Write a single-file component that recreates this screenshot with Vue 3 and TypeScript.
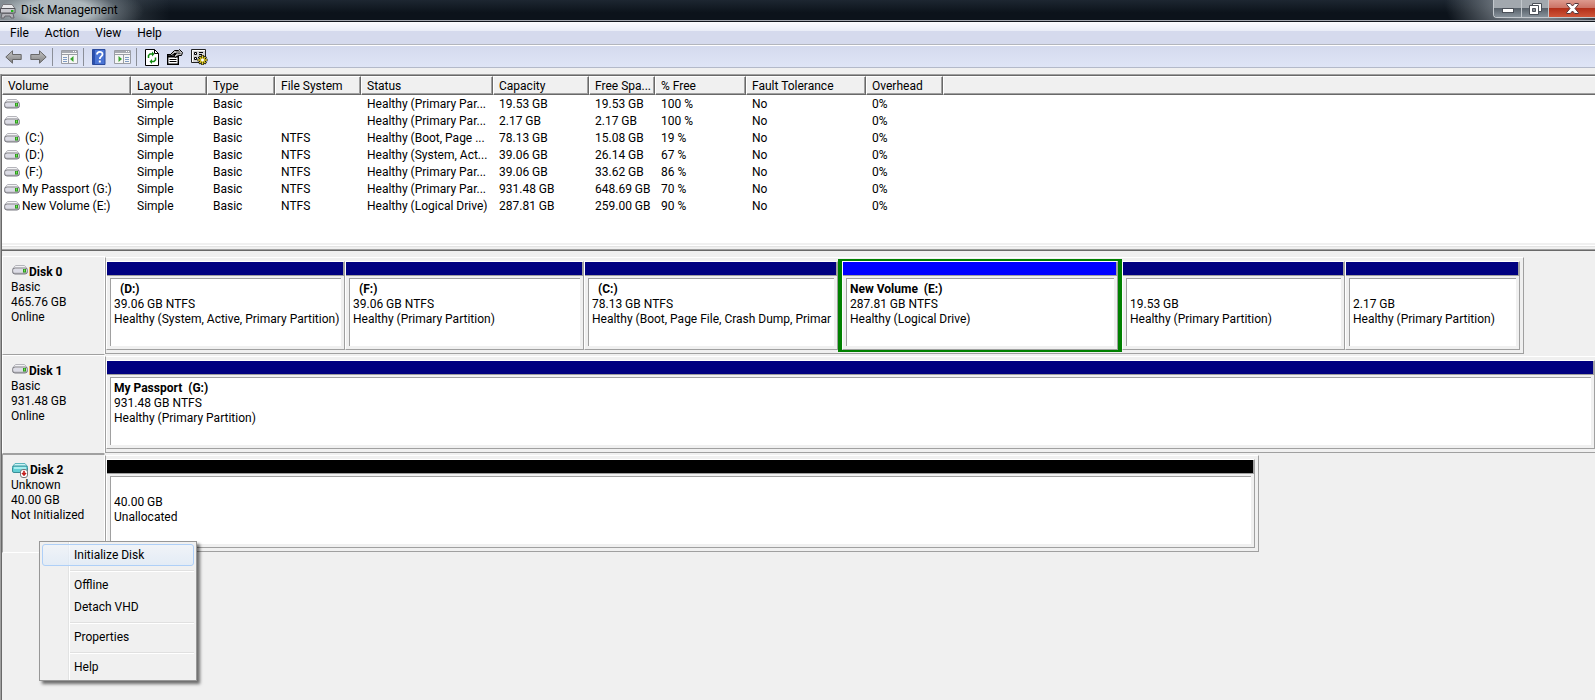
<script setup lang="ts">
interface Volume {
  name: string
  fs: string
  status: string
  capacity: string
  free: string
  percent: string
}

interface Partition {
  title: string
  size: string
  status: string
  span: number
  kind: 'primary' | 'logical' | 'unallocated'
  selected?: boolean
}

interface Disk {
  name: string
  type: string
  size: string
  state: string
  icon: 'drive' | 'unknown'
  span: number
  clipped?: boolean
  active?: boolean
  partitions: Partition[]
}

const menus = ['File', 'Action', 'View', 'Help']

const columns = [
  { label: 'Volume', cls: 'w-volume' },
  { label: 'Layout', cls: 'w-layout' },
  { label: 'Type', cls: 'w-type' },
  { label: 'File System', cls: 'w-fs' },
  { label: 'Status', cls: 'w-status' },
  { label: 'Capacity', cls: 'w-capacity' },
  { label: 'Free Spa...', cls: 'w-free' },
  { label: '% Free', cls: 'w-percent' },
  { label: 'Fault Tolerance', cls: 'w-fault' },
  { label: 'Overhead', cls: 'w-overhead' },
]

const volumes: Volume[] = [
  { name: '', fs: '', status: 'Healthy (Primary Par...', capacity: '19.53 GB', free: '19.53 GB', percent: '100 %' },
  { name: '', fs: '', status: 'Healthy (Primary Par...', capacity: '2.17 GB', free: '2.17 GB', percent: '100 %' },
  { name: ' (C:)', fs: 'NTFS', status: 'Healthy (Boot, Page ...', capacity: '78.13 GB', free: '15.08 GB', percent: '19 %' },
  { name: ' (D:)', fs: 'NTFS', status: 'Healthy (System, Act...', capacity: '39.06 GB', free: '26.14 GB', percent: '67 %' },
  { name: ' (F:)', fs: 'NTFS', status: 'Healthy (Primary Par...', capacity: '39.06 GB', free: '33.62 GB', percent: '86 %' },
  { name: 'My Passport (G:)', fs: 'NTFS', status: 'Healthy (Primary Par...', capacity: '931.48 GB', free: '648.69 GB', percent: '70 %' },
  { name: 'New Volume (E:)', fs: 'NTFS', status: 'Healthy (Logical Drive)', capacity: '287.81 GB', free: '259.00 GB', percent: '90 %' },
]

// Span of a full-width graph; each disk is scaled against it.
const FULL_SPAN = 1490

const disks: Disk[] = [
  {
    name: 'Disk 0', type: 'Basic', size: '465.76 GB', state: 'Online', icon: 'drive', span: 1419,
    partitions: [
      { title: '  (D:)', size: '39.06 GB NTFS', status: 'Healthy (System, Active, Primary Partition)', span: 239, kind: 'primary' },
      { title: '  (F:)', size: '39.06 GB NTFS', status: 'Healthy (Primary Partition)', span: 239, kind: 'primary' },
      { title: '  (C:)', size: '78.13 GB NTFS', status: 'Healthy (Boot, Page File, Crash Dump, Primar', span: 254, kind: 'primary' },
      { title: 'New Volume  (E:)', size: '287.81 GB NTFS', status: 'Healthy (Logical Drive)', span: 284, kind: 'logical', selected: true },
      { title: ' ', size: '19.53 GB', status: 'Healthy (Primary Partition)', span: 223, kind: 'primary' },
      { title: ' ', size: '2.17 GB', status: 'Healthy (Primary Partition)', span: 175, kind: 'primary' },
    ],
  },
  {
    name: 'Disk 1', type: 'Basic', size: '931.48 GB', state: 'Online', icon: 'drive', span: 1490, clipped: true,
    partitions: [
      { title: 'My Passport  (G:)', size: '931.48 GB NTFS', status: 'Healthy (Primary Partition)', span: 1489, kind: 'primary' },
    ],
  },
  {
    name: 'Disk 2', type: 'Unknown', size: '40.00 GB', state: 'Not Initialized', icon: 'unknown', span: 1154, active: true,
    partitions: [
      { title: ' ', size: '40.00 GB', status: 'Unallocated', span: 1149, kind: 'unallocated' },
    ],
  },
]

const contextGroups = [['Initialize Disk'], ['Offline', 'Detach VHD'], ['Properties'], ['Help']]

const graphWidth = (d: Disk) => ({ width: `${(d.span / FULL_SPAN) * 100}%` })

const slotWidth = (d: Disk, p: Partition) => {
  const total = d.partitions.reduce((sum, part) => sum + part.span, 0)
  return { width: `${(p.span / total) * 100}%` }
}
</script>

<template>
  <div class="window">
    <svg class="defs" width="0" height="0" aria-hidden="true">
      <defs>
        <linearGradient id="metal" x1="0" y1="0" x2="0" y2="1">
          <stop offset="0" stop-color="#f4f4f5" />
          <stop offset="1" stop-color="#a9a9b0" />
        </linearGradient>
        <linearGradient id="grey-arrow" x1="0" y1="0" x2="0" y2="1">
          <stop offset="0" stop-color="#c4c4c4" />
          <stop offset="1" stop-color="#808080" />
        </linearGradient>
        <symbol id="drive" viewBox="0 0 16 10">
          <path d="M3.500.5h9l2.600 3H.9z" fill="#f3f3f5" stroke="#b4b4ba" />
          <rect x=".5" y="3" width="15" height="6" rx="2.500" fill="url(#metal)" stroke="#7c7c84" />
          <path d="M2 4h9v3.500H2z" fill="#dcdce6" />
          <path d="M11 4h3v3.500h-3z" fill="#2c9e1c" />
          <path d="M12 4.500h1v2h-1z" fill="#7be05c" />
        </symbol>
        <symbol id="unknown" viewBox="0 0 17 15">
          <path d="M3 .5h10l2.500 3H.5z" fill="#c9f5f6" stroke="#5bb5bd" />
          <rect x=".5" y="3" width="15" height="6.500" rx="1.500" fill="#63cfd4" stroke="#3a8f98" />
          <path d="M2 4h12v2H2z" fill="#a9eef0" />
          <rect x="8.500" y="6.500" width="7" height="8" rx="2.500" fill="#fff" stroke="#77777c" />
          <path d="M11.500 8h1v2H14v1h-1v1h-1v1h-0v-1h-1v-1h-1v-1h1.500z" fill="#c41e1e" stroke="#c41e1e" stroke-width=".6" />
        </symbol>
      </defs>
    </svg>

    <header class="titlebar">
      <svg class="app-icon" width="16" height="16" viewBox="0 0 16 16" aria-hidden="true">
        <path d="M3 1.500h9l3 4H1z" fill="#e8e8ea" stroke="#77777c" />
        <path d="M.5 5.500h14.500v4.500H.5z" fill="#c9c9cf" stroke="#55555b" />
        <path d="M11 7h2.500v2H11z" fill="#25b51a" />
        <path d="M2 10.500h11l1 4.500h-3l-1-2H5l-1 2H1z" fill="#b2b2b8" stroke="#66666c" />
      </svg>
      <h1>Disk Management</h1>
      <div class="controls">
        <button class="ctl min" type="button" aria-label="Minimize">
          <svg width="12" height="6" viewBox="0 0 12 6"><rect x=".5" y=".5" width="11" height="4" fill="#fff" stroke="#4b5058" /></svg>
        </button>
        <button class="ctl restore" type="button" aria-label="Restore">
          <svg width="13" height="12" viewBox="0 0 13 12">
            <path d="M3.500 .5h9v8h-9z" fill="#fff" stroke="#4b5058" />
            <path d="M.5 2.500h9v9h-9z" fill="#fff" stroke="#4b5058" />
            <path d="M3.500 5.500h3v3h-3z" fill="#8b9097" stroke="#4b5058" />
          </svg>
        </button>
        <button class="ctl close" type="button" aria-label="Close">
          <svg width="13" height="11" viewBox="0 0 13 11">
            <path d="M.7.5h3.600l2.200 2.500L8.700.5h3.600v1L9 5.500l3.300 4v1H8.700L6.500 8l-2.200 2.500H.7v-1L4 5.500l-3.300-4z" fill="#fff" stroke="#54353a" />
          </svg>
        </button>
      </div>
    </header>

    <nav class="menubar">
      <button v-for="m in menus" :key="m" type="button">{{ m }}</button>
    </nav>

    <div class="toolbar" role="toolbar" aria-label="Standard">
      <button type="button" aria-label="Back">
        <svg width="17" height="14" viewBox="0 0 17 14"><path d="M.8 7L7.500.8v3.700h8.700v5H7.500v3.700z" fill="url(#grey-arrow)" stroke="#686868" /></svg>
      </button>
      <button type="button" aria-label="Forward">
        <svg width="17" height="14" viewBox="0 0 17 14"><path d="M16.200 7L9.500.8v3.700H.8v5h8.700v3.700z" fill="url(#grey-arrow)" stroke="#686868" /></svg>
      </button>
      <span class="sep"></span>
      <button type="button" aria-label="Show/Hide Console Tree">
        <svg width="17" height="14" viewBox="0 0 17 14">
          <path d="M.5.5h16v13H.5z" fill="#f6f6f6" stroke="#9a9da4" />
          <path d="M1 1h15v2H1z" fill="#a6a9b0" /><path d="M1 4.500h15M7.500 5v8" stroke="#9a9da4" fill="none" />
          <path d="M12 1h1v1h-1zM14 1h1v1h-1z" fill="#fff" />
          <path d="M2 7.500h4M2 9.500h4M2 11.500h4" stroke="#7f9cc4" />
          <path d="M12.500 6v6L9 9z" fill="#39a52e" />
        </svg>
      </button>
      <span class="sep"></span>
      <button type="button" aria-label="Help Topics">
        <svg width="14" height="16" viewBox="0 0 14 16">
          <path d="M.5.5h12.500v15H.5z" fill="#4a74d4" stroke="#2a4a9c" /><path d="M1 1h2v14H1z" fill="#2b50ae" />
          <path d="M5 5.500C5 2 10.500 2 10.500 5.200 10.500 7.500 7.800 7.200 7.800 10" fill="none" stroke="#fff" stroke-width="1.800" />
          <path d="M6.800 11.500h2v2h-2z" fill="#fff" />
        </svg>
      </button>
      <button type="button" aria-label="Show/Hide Action Pane">
        <svg width="17" height="14" viewBox="0 0 17 14">
          <path d="M.5.5h16v13H.5z" fill="#f6f6f6" stroke="#9a9da4" />
          <path d="M1 1h15v2H1z" fill="#a6a9b0" /><path d="M1 4.500h15M9.500 5v8" stroke="#9a9da4" fill="none" />
          <path d="M12 1h1v1h-1zM14 1h1v1h-1z" fill="#fff" />
          <path d="M11 7.500h4M11 9.500h4M11 11.500h4" stroke="#7f9cc4" />
          <path d="M4.500 6v6L8 9z" fill="#39a52e" />
        </svg>
      </button>
      <span class="sep"></span>
      <button type="button" aria-label="Refresh">
        <svg width="14" height="17" viewBox="0 0 14 17">
          <path d="M.5.5h9l4 4v12H.5z" fill="#fff" stroke="#000" /><path d="M9.500.5v4h4" fill="none" stroke="#000" />
          <path d="M3.500 9V6.500L5 5h3M10.500 8.500V11L9 12.500H6" fill="none" stroke="#118a11" stroke-width="1.500" />
          <path d="M7 2.500L9.500 5 7 7.500zM7 10l-2.500 2.500L7 15z" fill="#118a11" />
        </svg>
      </button>
      <button type="button" aria-label="Properties">
        <svg width="16" height="16" viewBox="0 0 16 16">
          <path d="M.7 5.700h10.600v9.600H.7z" fill="#fff" stroke="#000" stroke-width="1.400" />
          <path d="M1 6.500h10v2H1z" fill="#000" /><path d="M2.500 10.500h7M2.500 12.500h7" stroke="#000" />
          <path d="M3 6L7.500 1.500h4L12.500.5l3 3-1 3h-3L8 8.500 7 7l2.500-2.500H7L5 6.500z" fill="#bdbdbd" stroke="#000" />
          <path d="M9 3h4M10.500 4.500h3" stroke="#555" />
        </svg>
      </button>
      <button type="button" aria-label="Settings">
        <svg width="17" height="17" viewBox="0 0 17 17">
          <path d="M.5.5h14v13H.5z" fill="#d4d4d4" stroke="#222" /><path d="M1.500 13V1.500H14" fill="none" stroke="#fff" />
          <path d="M3.500 3.500h2v2h-2zM3.500 8.500h2v2h-2z" fill="#fff" stroke="#000" />
          <path d="M8 3.500h4M8 5.500h3M7 8.500h2" stroke="#000" />
          <path d="M11.500 6v10M6.500 11h10M8 7.500l7 7M15 7.500l-7 7" stroke="#000" stroke-width="2.600" />
          <path d="M11.500 6.500v9M7 11h9M8.500 8l6 6M14.500 8l-6 6" stroke="#f0dc28" stroke-width="1.400" />
          <circle cx="11.500" cy="11" r="2" fill="#fff" stroke="#b8a410" />
        </svg>
      </button>
    </div>

    <main class="content">
      <section class="list">
        <table>
          <colgroup>
            <col v-for="c in columns" :key="c.label" :class="c.cls" />
            <col />
          </colgroup>
          <thead>
            <tr>
              <th v-for="c in columns" :key="c.label" scope="col">{{ c.label }}</th>
              <td class="rest"></td>
            </tr>
          </thead>
          <tbody>
            <tr v-for="(v, i) in volumes" :key="i">
              <td class="vol"><span><svg width="16" height="10"><use href="#drive" /></svg>{{ v.name }}</span></td>
              <td>Simple</td>
              <td>Basic</td>
              <td>{{ v.fs }}</td>
              <td>{{ v.status }}</td>
              <td>{{ v.capacity }}</td>
              <td>{{ v.free }}</td>
              <td>{{ v.percent }}</td>
              <td>No</td>
              <td>0%</td>
              <td></td>
            </tr>
          </tbody>
        </table>
      </section>
      <div class="splitter"></div>

      <section class="graphical">
        <article v-for="d in disks" :key="d.name" class="disk">
          <div class="label" :class="{ active: d.active }">
            <h2>
              <svg v-if="d.icon === 'drive'" width="16" height="10"><use href="#drive" /></svg>
              <svg v-else width="17" height="15"><use href="#unknown" /></svg>
              <span>{{ d.name }}</span>
            </h2>
            <p>{{ d.type }}</p>
            <p>{{ d.size }}</p>
            <p>{{ d.state }}</p>
          </div>
          <div class="track">
            <div class="graph" :class="{ clipped: d.clipped }" :style="graphWidth(d)">
              <div
                v-for="(p, i) in d.partitions"
                :key="i"
                class="slot"
                :class="[p.kind, { selected: p.selected }]"
                :style="slotWidth(d, p)"
              >
                <div class="partition">
                  <div class="bar"></div>
                  <div class="box">
                    <h3>{{ p.title }}</h3>
                    <p>{{ p.size }}</p>
                    <p>{{ p.status }}</p>
                  </div>
                </div>
              </div>
            </div>
          </div>

          <div v-if="d.active" class="context" role="menu">
            <div v-for="(g, gi) in contextGroups" :key="gi" class="group">
              <button
                v-for="item in g"
                :key="item"
                type="button"
                role="menuitem"
                :class="{ hot: item === 'Initialize Disk' }"
              >{{ item }}</button>
            </div>
          </div>
        </article>
      </section>
    </main>
  </div>
</template>

<style>
body {
  margin: 0;
  background: #f0f0f0;
}
</style>

<style scoped>
.window {
  display: flex;
  flex-direction: column;
  min-height: 100vh;
  overflow: hidden;
  background: #f0f0f0;
  color: #000;
  font: 12px/15px Roboto, "Liberation Sans", sans-serif;
}
.window * { box-sizing: border-box; }
.defs { position: absolute; }
h1, h2, h3, p { margin: 0; font-size: 12px; line-height: 15px; }
h1, p { font-weight: 400; }
svg { display: block; flex: none; }
button {
  padding: 0;
  border: 0;
  background: none;
  color: inherit;
  font: inherit;
}

.titlebar {
  display: flex;
  align-items: center;
  height: 22px;
  border-bottom: 1px solid #10151c;
  box-shadow: inset 0 -1px #a3a7ae;
  background:
    radial-gradient(ellipse 86px 28px at 58px 11px, rgba(184, 194, 199, 0.9) 40%, rgba(120, 130, 138, 0.5) 70%, transparent 100%),
    linear-gradient(90deg, #8f979b 0, rgba(80, 90, 98, 0.6) 110px, transparent 170px),
    radial-gradient(ellipse 90px 50px at calc(100% - 60px) 4px, #7c848c 30%, transparent 100%),
    linear-gradient(#1d2631, #0c131b 60%);
}
.app-icon { margin-right: 5px; }
.controls {
  display: flex;
  align-self: flex-start;
  height: 18px;
  margin-left: auto;
  border: 1px solid #c3c8cd;
  border-width: 0 0 1px 1px;
  border-bottom-left-radius: 4px;
  overflow: hidden;
}
.ctl {
  display: flex;
  align-items: center;
  justify-content: center;
  border-right: 1px solid #c3c8cd;
  background: linear-gradient(#a2a8ae 0 45%, #59626b 50%, #87919a);
}
.min { width: 28px; padding-top: 4px; }
.restore { width: 27px; }
.close {
  width: 46px;
  border-right: 0;
  background: linear-gradient(#dd9a8e 0, #cc7466 45%, #b3301a 50%, #cf5538);
}

.menubar {
  display: flex;
  gap: 16px;
  height: 23px;
  padding: 0 10px;
  border-bottom: 1px solid #b3b6bd;
  background: linear-gradient(#fbfcfe, #e9edf7 9px, #d5daed 9px);
}
.toolbar {
  display: flex;
  align-items: center;
  gap: 5px;
  height: 23px;
  padding: 1px 5px 0;
  border-top: 1px solid #fff;
  border-bottom: 1px solid #b3b9c9;
  background: linear-gradient(#d4daee, #dfe5f6);
}
.sep {
  width: 1px;
  height: 18px;
  margin-right: 3px;
  background: #8b8f98;
}
.toolbar button + button { margin-left: 3px; }

.content {
  display: flex;
  flex: 1;
  flex-direction: column;
  margin-top: 6px;
  border-left: 1px solid #a0a0a0;
}
.list {
  height: 169px;
  border-top: 1px solid #a0a0a0;
  border-left: 1px solid #696969;
  box-shadow: inset 0 1px #696969;
  padding-top: 1px;
  background: #fff;
}
table {
  width: 100%;
  border-collapse: separate;
  border-spacing: 0;
  table-layout: fixed;
}
.w-volume { width: 129px; }
.w-layout { width: 76px; }
.w-type { width: 68px; }
.w-fs { width: 86px; }
.w-status { width: 132px; }
.w-capacity { width: 96px; }
.w-free { width: 66px; }
.w-percent { width: 91px; }
.w-fault { width: 120px; }
.w-overhead { width: 77px; }
th, .rest {
  height: 19px;
  border: 1px solid #fff;
  border-bottom-color: #696969;
  background: #f0f0f0;
  box-shadow: inset 0 -1px #a0a0a0;
}
.rest { border-right: 0; }
th {
  padding: 1px 0 0 5px;
  border-right-color: #696969;
  box-shadow: inset -1px -1px #a0a0a0;
  font-weight: 400;
  text-align: left;
  white-space: nowrap;
}
tbody td {
  height: 17px;
  padding: 2px 0 0 6px;
  white-space: nowrap;
}
tbody .vol { padding-left: 2px; }
.vol span { display: flex; gap: 2px; height: 15px; white-space: pre; }
.vol svg { margin-top: 2px; }

.splitter {
  height: 8px;
  border-left: 1px solid #696969;
  border-bottom: 1px solid #696969;
  background: linear-gradient(#f0f0f0 0 2px, #fff 2px 3px, #e3e3e3 3px 4px, #f0f0f0 4px 6px, #a0a0a0 6px);
}

.graphical {
  flex: 1;
  padding-top: 5px;
  border-left: 1px solid #696969;
}
.disk {
  position: relative;
  display: flex;
  height: 99px;
}
.label {
  width: 103px;
  flex: none;
  padding: 8px 0 0 8px;
  border: 1px solid #fff;
  border-bottom-color: #a0a0a0;
}
.label.active {
  border-color: #a0a0a0 #fff #fff #a0a0a0;
}
.label h2 {
  display: flex;
  height: 15px;
  padding-left: 1px;
}
.label h2 span { flex: 1; }
.label h2 svg + span { margin-left: 1px; }
.track {
  flex: 1;
  min-width: 0;
  padding: 1px 0;
}
.graph {
  display: flex;
  height: 97px;
  padding: 3px 3px 3px 0;
  border: 1px solid #a0a0a0;
  border-top-color: #fff;
}
.graph.clipped { padding-right: 0; border-right: 0; }
.slot {
  display: flex;
  flex: none;
  min-width: 0;
}
.slot.selected {
  margin: -2px 0;
  border: solid #008000;
  border-width: 2px 4px;
}
.partition {
  display: flex;
  flex: 1;
  flex-direction: column;
  min-width: 0;
  height: 89px;
  border: 1px solid #fff;
  border-right-color: #a0a0a0;
  border-bottom-color: #a0a0a0;
}
.bar {
  height: 14px;
  flex: none;
  border-right: 1px solid #a0a0a0;
  border-bottom: 1px solid #a0a0a0;
  background: #000080;
}
.logical .bar { background: #0000ff; }
.unallocated .bar { background: #000; }
.box {
  flex: 1;
  margin: 2px 3px 3px;
  padding: 3px 0 0 3px;
  border-top: 1px solid #a0a0a0;
  border-left: 1px solid #a0a0a0;
  background: #fff;
}
.box h3, .box p {
  height: 15px;
  overflow: hidden;
  white-space: pre;
}

.context {
  position: absolute;
  z-index: 1;
  left: 37px;
  top: 87px;
  width: 158px;
  padding: 2px;
  border: 1px solid #979797;
  background: linear-gradient(90deg, #f0f0f0 28px, #e2e3e3 28px 29px, #fff 29px 30px, #f0f0f0 30px);
  box-shadow: 3px 3px 3px rgba(0, 0, 0, 0.55);
}
.context button {
  display: block;
  width: 100%;
  height: 22px;
  padding-left: 32px;
  text-align: left;
}
.context .hot {
  border: 1px solid #aecff7;
  border-radius: 3px;
  padding-left: 31px;
  background: linear-gradient(rgba(240, 245, 252, 0.6), rgba(222, 234, 248, 0.7));
}
.group + .group::before {
  content: "";
  display: block;
  height: 1px;
  margin: 0 0 2px 28px;
  border-top: 1px solid #e0e0e0;
  background: #fff;
}
.group:not(:last-child) { padding-bottom: 4px; }
</style>
